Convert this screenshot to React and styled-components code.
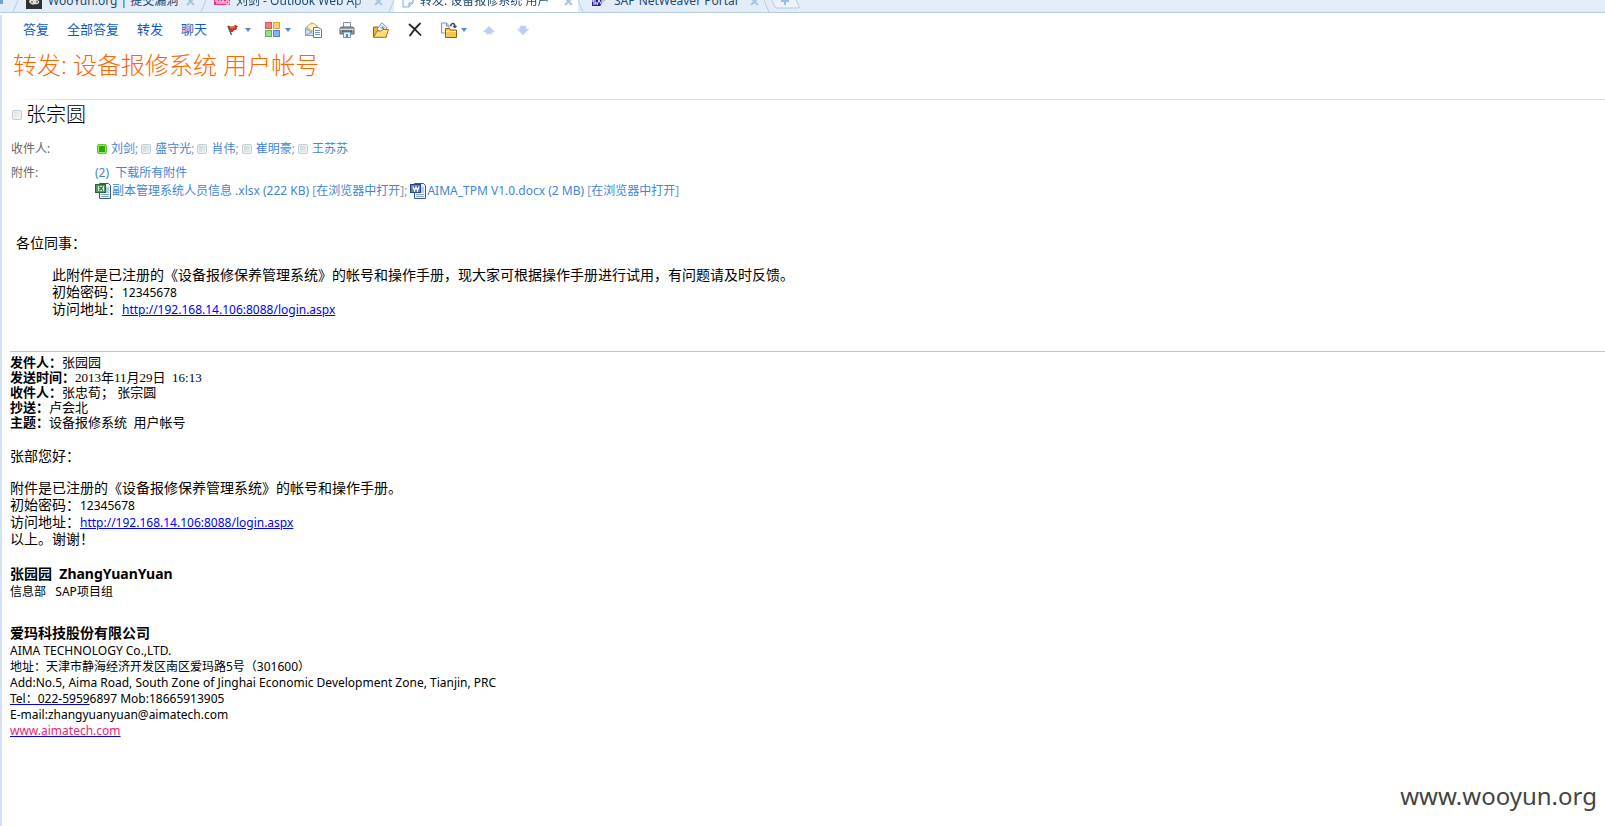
import React from "react";
import styled, { createGlobalStyle } from "styled-components";

const GlobalStyle = createGlobalStyle`
  body {
    margin: 0;
    background: #fff;
    color: #000;
    font-family: "Noto Sans", "Noto Sans CJK SC", sans-serif;
    font-size: 12px;
  }
  button {
    border: 0;
    padding: 0;
    background: none;
    font: inherit;
    color: inherit;
    cursor: pointer;
  }
  svg {
    display: block;
    flex: none;
  }
`;

const Page = styled.div`
  position: relative;
  min-height: 100vh;
  display: flex;
  flex-direction: column;
  overflow: hidden;
`;

/* tab strip, scrolled so only the lower edge of the tabs shows */
const TabStrip = styled.nav`
  height: 12px;
  display: flex;
  align-items: flex-end;
  overflow: hidden;
  background: #e3edf8;
  border-bottom: 1px solid #b4cbe6;
  color: #1c4a73;
  font-size: 12px;
`;

const HomeTab = styled.div`
  width: 12px;
  height: 22px;
  display: flex;
  align-items: center;
`;

const Tab = styled.div`
  width: ${props => props.width}px;
  height: 22px;
  display: flex;
  align-items: center;
  background: ${props => (props.active ? "#fff" : "transparent")};
`;

const TabLabel = styled.button`
  flex: 1;
  min-width: 0;
  height: 22px;
  display: flex;
  align-items: center;
  gap: 6px;
  padding-left: 8px;
  overflow: hidden;
  white-space: nowrap;
`;

const TabText = styled.span`
  flex: 1;
  min-width: 0;
  overflow: hidden;
  text-align: left;
  line-height: 20px;
  mask-image: ${props => (props.fade ? "linear-gradient(to right, #000 85%, transparent)" : "none")};
`;

const CloseButton = styled.button`
  padding-right: 5px;
`;

const Pane = styled.main`
  flex: 1;
  margin-top: 2px;
  border-left: 2px solid #d3e2f4;
`;

const Toolbar = styled.div`
  height: 27px;
  display: flex;
  align-items: center;
  gap: 14px;
  padding: 0 0 4px 21px;
`;

const TextButton = styled.button`
  padding-right: 4px;
  color: #0a5cc4;
  font-size: 13px;
  line-height: 20px;
  white-space: nowrap;
`;

const IconButton = styled.button`
  width: ${props => (props.drop ? 26 : 20)}px;
  display: flex;
  align-items: center;
  gap: 4px;
  padding-top: 2px;
`;

const Subject = styled.h1`
  margin: 0;
  padding-left: 11px;
  color: #ff6600;
  font-size: 24px;
  font-weight: 300;
  line-height: 38px;
`;

const Divider = styled.div`
  height: 1px;
  margin: 15px 0 0 10px;
  background: linear-gradient(to right, #fff, #dcdcdc 60px);
`;

const Sender = styled.h2`
  margin: 1px 0 0;
  padding-left: 10px;
  display: flex;
  align-items: center;
  gap: 4px;
  font-size: 20px;
  font-weight: 300;
  line-height: 28px;
`;

const Fields = styled.dl`
  margin: 8px 0 0;
  padding-left: 9px;
  display: grid;
  grid-template-columns: 84px 1fr;
  row-gap: 3px;
`;

const FieldName = styled.dt`
  color: #666;
  line-height: ${props => props.line}px;
`;

const FieldValue = styled.dd`
  margin: 0;
  color: #3f86d8;
  line-height: ${props => props.line}px;
`;

const People = styled.div`
  display: flex;
  flex-wrap: wrap;
  gap: 3px;
  padding-left: 2px;
`;

const Person = styled.span`
  display: flex;
  align-items: center;
  gap: 4px;
`;

const Presence = styled.i`
  width: 8px;
  height: 8px;
  border: 1px solid ${props => (props.online ? "#5fc62c" : "#c3cdd0")};
  border-radius: 2px;
  background: ${props =>
    props.online
      ? "linear-gradient(135deg, #3cae14, #2a9a0c)"
      : props.plain
      ? "linear-gradient(135deg, #dcdcdc, #f8f8f8)"
      : "linear-gradient(135deg, #c2d3d6, #eef3f4)"};
  box-shadow: inset 0 0 0 1px ${props => (props.online ? "#8fee58" : "#eef1f2")};
`;

const Files = styled.div`
  display: flex;
  flex-wrap: wrap;
  gap: 3px;
`;

const FileItem = styled.span`
  display: flex;
  align-items: center;
  gap: 1px;
  white-space: nowrap;
`;

const PlainLink = styled.a`
  color: #3f86d8;
  text-decoration: none;
`;

const Gray = styled.span`
  color: #8a9bb0;
`;

const Message = styled.article`
  margin-top: 34px;
  padding-left: 8px;
  font-size: 14px;
  line-height: 17px;
`;

const Greeting = styled.p`
  margin: 0;
  padding-left: 6px;
`;

const Paragraph = styled.p`
  margin: 15px 0 0;
  padding-left: ${props => (props.indent ? 42 : 0)}px;
`;

const Small = styled.span`
  font-size: 12px;
  line-height: 12px;
`;

const BodyLink = styled.a`
  color: #0000ff;
  font-size: 12px;
  line-height: 12px;
`;

const Quoted = styled.section`
  margin-top: 34px;
  padding-top: 3px;
  border-top: 1px solid #b5c4df;
`;

const Meta = styled.div`
  margin-bottom: 17px;
  font-family: "Liberation Serif", "Noto Sans CJK SC", serif;
  font-size: 13px;
  line-height: 15px;
`;

const Signature = styled.div`
  margin-top: 18px;
  font-size: 12px;
  line-height: 16px;
`;

const SignName = styled.div`
  font-size: 14px;
  font-weight: bold;
  line-height: 18px;
`;

const Department = styled.div`
  line-height: 18px;
  margin-bottom: 23px;
`;

const Contact = styled.div`
  padding-top: 1px;
`;

const SignLink = styled.a`
  color: ${props => (props.site ? "#f0246e" : "#000")};
  text-decoration-color: #0000ff;
`;

const Watermark = styled.div`
  position: absolute;
  right: 8px;
  bottom: 14px;
  color: #444;
  font-size: 24px;
  line-height: 32px;
`;

const Close = () => (
  <svg width="9" height="9" viewBox="0 0 9 9">
    <path d="M1 1l7 7M8 1L1 8" stroke="#a9c4e2" strokeWidth="2" />
  </svg>
);

const Slant = ({ back }) => (
  <svg width="6" height="12" viewBox="0 0 6 12">
    <path d={back ? "M0 0L5 12" : "M6 0L1 12"} stroke="#b4cbe6" fill="none" />
  </svg>
);

const Arrow = () => (
  <svg width="6" height="4" viewBox="0 0 6 4">
    <path d="M0 0h6L3 4z" fill="#5b87d6" />
  </svg>
);

const WooyunIcon = () => (
  <svg width="16" height="16" viewBox="0 0 16 16">
    <rect width="16" height="16" fill="#303030" />
    <path d="M3 9q0-3 3-2q2-3 4 0q4 0 3 3q-2 2-4 1q-3 2-6-2z" fill="#ddd" />
    <path d="M5 9h2M10 9h2" stroke="#333" />
  </svg>
);

const AimaIcon = () => (
  <svg width="16" height="16" viewBox="0 0 16 16">
    <path d="M0 6h16v6H0z" fill="#e8308c" />
    <path d="M1 8h3v3M6 7v4M8 11V8h2v3M12 8h3v3h-3zM2 10h1" fill="none" stroke="#fff" />
  </svg>
);

const NoteIcon = () => (
  <svg width="12" height="14" viewBox="0 0 12 14">
    <path d="M1 1h10v8l-4 4H1z" fill="#f5faff" stroke="#7aaee6" />
    <path d="M11 9H7v4" fill="#cfe3f8" stroke="#7aaee6" />
  </svg>
);

const SapIcon = () => (
  <svg width="16" height="16" viewBox="0 0 16 16">
    <path d="M0 5h15L8 13H0z" fill="#20209a" />
    <path d="M4 7H1v2h3v2H1M5 12l2-5 2 4M10 12V7h2v2h-2" fill="none" stroke="#fff" />
  </svg>
);

const FlagIcon = () => (
  <svg width="16" height="16" viewBox="0 0 16 16">
    <path d="M3 4l3.500 9" stroke="#3f4a7a" strokeWidth="1.300" />
    <path d="M3 4l3 1 2-.2 2-1.300 2.500.8-1.300 1.500.3 1.500-2.500.4-1.800 2.300-1.200-.8z" fill="#d6361c" stroke="#8f2416" strokeWidth=".7" />
    <path d="M5 5.500l2 .6 3-1.300" stroke="#f4805e" fill="none" />
  </svg>
);

const CategoryIcon = () => (
  <svg width="16" height="16" viewBox="0 0 16 16">
    <rect x=".5" y=".5" width="6" height="6" fill="#f07e76" stroke="#d9584f" />
    <rect x="8.500" y=".5" width="6" height="6" fill="#f9cf78" stroke="#dda23c" />
    <rect x=".5" y="8.500" width="6" height="6" fill="#90e282" stroke="#58b84a" />
    <rect x="8.500" y="8.500" width="6" height="6" fill="#8ab2f8" stroke="#5080dc" />
  </svg>
);

const MailIcon = () => (
  <svg width="17" height="16" viewBox="0 0 17 16">
    <path d="M.5 6L7 .8 14 6v7.500H.5z" fill="#cfe0f6" stroke="#7f9cc4" />
    <path d="M2.500 6q0-4 5-4.500 4.500.5 4.500 4.500L7.500 9z" fill="#fff3b8" stroke="#d9b44a" />
    <path d="M.5 6.500L7 10l-6.500 3.500" fill="none" stroke="#7f9cc4" />
    <path d="M8.500 5.500h5l3 2v8h-8z" fill="#fff" stroke="#5a78b0" />
    <path d="M10 8.500h5M10 10.500h5M10 12.500h5" stroke="#7896cc" />
  </svg>
);

const PrintIcon = () => (
  <svg width="16" height="16" viewBox="0 0 16 16">
    <path d="M4.500 6V.5h7V6" fill="#f6f8fc" stroke="#8890a0" />
    <path d="M1 6.500Q1 5 3 5h10q2 0 2 1.500V12H1z" fill="#9a9ea6" stroke="#5c6068" />
    <path d="M1 7.500h14" stroke="#d8dadf" />
    <path d="M3 9.500h10" stroke="#50545c" strokeWidth="2" />
    <path d="M4.500 10h7v5.500h-7z" fill="#e4f2fd" stroke="#6e90b8" />
    <path d="M8 12v3" stroke="#3b8fd6" strokeWidth="2" />
  </svg>
);

const MoveIcon = () => (
  <svg width="16" height="16" viewBox="0 0 16 16">
    <path d="M.5 15V5h5l1 2h7v8z" fill="#e9b53c" stroke="#8a6518" />
    <path d="M4 7L9 .8l5 5-4 6z" fill="#fafcff" stroke="#8090ac" />
    <path d="M7.500 5l3 3M9 3.500l3 3" stroke="#5e7fb8" />
    <path d="M9 5l2 2" stroke="#d4503c" />
    <path d="M.7 15.300L4 9h4l2-1.500h5.500L13 15.300z" fill="#fcdc78" stroke="#a37a20" />
  </svg>
);

const DeleteIcon = () => (
  <svg width="16" height="16" viewBox="0 0 16 16">
    <path d="M2.500 2.500q5 4 11 10.500M13 1.500Q8 6 3 13.500" fill="none" stroke="#262626" strokeWidth="1.800" strokeLinecap="round" />
  </svg>
);

const CopyIcon = () => (
  <svg width="16" height="16" viewBox="0 0 16 16">
    <path d="M.5 1h5L8 3.500V11H.5z" fill="#f2f6fc" stroke="#8495b4" />
    <path d="M5.500 1v3H8" fill="none" stroke="#8495b4" />
    <path d="M9 3.500h1q0-2 2-2 2 0 2 3.500M12 4l2 1.500L15.500 4" fill="none" stroke="#35456e" strokeWidth="1.300" />
    <path d="M4.500 15.500v-9h4l1 1.500h6v7.500z" fill="#f5c550" stroke="#8a6518" />
    <path d="M5 9.500h10" stroke="#ffeeaa" />
  </svg>
);

const MoveArrow = ({ down }) => (
  <svg width="16" height="16" viewBox="0 0 16 16">
    <path d={down ? "M5 4h6v3h3l-6 6-6-6h3z" : "M8 4l6 6h-3v2H5v-2H2z"} fill="#b9cdf6" stroke="#d5e1fb" strokeWidth=".8" />
  </svg>
);

const FileIcon = ({ word }) => (
  <svg width="16" height="16" viewBox="0 0 16 16">
    <path d="M4.500.5h9l2 2v13h-11z" fill="#eef4fd" stroke={word ? "#33599c" : "#375a86"} />
    <path d="M11 5h3M11 7h3M11 9h3M6 11.500h8M6 13.500h8" stroke="#86a5d8" />
    <rect x=".5" y="1.500" width="10" height="8" fill={word ? "#5b80cc" : "#4c9c55"} stroke={word ? "#264688" : "#256b30"} />
    <path d="M3 3h6v5H3z" fill={word ? "#3558a8" : "#e6f4e6"} />
    <path
      d={word ? "M3 3.500l1.500 4L6 4l1.500 3.500L9 3.500" : "M4 3.500l4 4M8 3.500l-4 4"}
      fill="none"
      stroke={word ? "#fff" : "#2c7d36"}
      strokeWidth="1.400"
    />
  </svg>
);

const recipients = ["刘剑", "盛守光", "肖伟", "崔明豪", "王苏苏"];

const meta = [
  ["发件人：", "张园园"],
  ["发送时间：", "2013年11月29日\u00a0 16:13"],
  ["收件人：", "张忠荀； 张宗圆"],
  ["抄送：", "卢会北"],
  ["主题：", "设备报修系统\u00a0 用户帐号"]
];

const loginUrl = "http://192.168.14.106:8088/login.aspx";

function BrowserTab({ icon, text, width, active, fade }) {
  return (
    <Tab width={width} active={active}>
      <TabLabel>
        {icon}
        <TabText fade={fade}>{text}</TabText>
      </TabLabel>
      <CloseButton aria-label="关闭">
        <Close />
      </CloseButton>
    </Tab>
  );
}

function Credentials() {
  return (
    <>
      初始密码：<Small>12345678</Small>
      <br />
      访问地址：<BodyLink href={loginUrl}>{loginUrl}</BodyLink>
    </>
  );
}

function App() {
  return (
    <Page>
      <GlobalStyle />
      <TabStrip>
        <HomeTab>
          <svg width="4" height="12" viewBox="0 0 4 12">
            <path d="M0 2h3v7H0z" fill="#6f9fd6" />
          </svg>
        </HomeTab>
        <Slant />
        <BrowserTab width={182} icon={<WooyunIcon />} text="WooYun.org | 提交漏洞" />
        <Slant />
        <BrowserTab width={182} icon={<AimaIcon />} text="刘剑 - Outlook Web Ap" fade />
        <Slant />
        <BrowserTab width={184} icon={<NoteIcon />} text="转发: 设备报修系统 用户" active fade />
        <Slant back />
        <BrowserTab width={180} icon={<SapIcon />} text="SAP NetWeaver Portal" />
        <Slant back />
        <button aria-label="新建标签页">
          <svg width="32" height="12" viewBox="0 0 32 12">
            <path d="M2 0l3 7q1 1 3 1h20q2 0 1-2l-3-6" fill="#eaf2fb" stroke="#b4cbe6" />
            <path d="M11 1h8M15 0v5" stroke="#9dbde0" strokeWidth="2" />
          </svg>
        </button>
      </TabStrip>

      <Pane>
        <Toolbar>
          <TextButton>答复</TextButton>
          <TextButton>全部答复</TextButton>
          <TextButton>转发</TextButton>
          <TextButton>聊天</TextButton>
          <IconButton drop aria-label="标志">
            <FlagIcon />
            <Arrow />
          </IconButton>
          <IconButton drop aria-label="类别">
            <CategoryIcon />
            <Arrow />
          </IconButton>
          <IconButton aria-label="邮件">
            <MailIcon />
          </IconButton>
          <IconButton aria-label="打印">
            <PrintIcon />
          </IconButton>
          <IconButton aria-label="移动">
            <MoveIcon />
          </IconButton>
          <IconButton aria-label="删除">
            <DeleteIcon />
          </IconButton>
          <IconButton drop aria-label="复制到文件夹">
            <CopyIcon />
            <Arrow />
          </IconButton>
          <IconButton aria-label="上一封">
            <MoveArrow />
          </IconButton>
          <IconButton aria-label="下一封">
            <MoveArrow down />
          </IconButton>
        </Toolbar>

        <Subject>转发: 设备报修系统 用户帐号</Subject>
        <Divider />
        <Sender>
          <Presence plain />
          张宗圆
        </Sender>

        <Fields>
          <FieldName line={24}>收件人:</FieldName>
          <FieldValue line={24}>
            <People>
              {recipients.map((name, i) => (
                <Person key={name}>
                  <Presence online={i === 0} />
                  <span>
                    {name}
                    {i < recipients.length - 1 && <Gray>;</Gray>}
                  </span>
                </Person>
              ))}
            </People>
          </FieldValue>
          <FieldName line={18}>附件:</FieldName>
          <FieldValue line={18}>
            (2)&nbsp; <PlainLink href="#all">下载所有附件</PlainLink>
            <Files>
              <FileItem>
                <FileIcon />
                <span>
                  <PlainLink href="#xlsx">副本管理系统人员信息 .xlsx (222 KB)</PlainLink> <Gray>[</Gray>
                  <PlainLink href="#open-xlsx">在浏览器中打开</PlainLink>
                  <Gray>];</Gray>
                </span>
              </FileItem>
              <FileItem>
                <FileIcon word />
                <span>
                  <PlainLink href="#docx">AIMA_TPM V1.0.docx (2 MB)</PlainLink> <Gray>[</Gray>
                  <PlainLink href="#open-docx">在浏览器中打开</PlainLink>
                  <Gray>]</Gray>
                </span>
              </FileItem>
            </Files>
          </FieldValue>
        </Fields>

        <Message>
          <Greeting>各位同事：</Greeting>
          <Paragraph indent>
            此附件是已注册的《设备报修保养管理系统》的帐号和操作手册，现大家可根据操作手册进行试用，有问题请及时反馈。
            <br />
            <Credentials />
          </Paragraph>

          <Quoted>
            <Meta>
              {meta.map(([label, value]) => (
                <div key={label}>
                  <b>{label}</b>
                  {value}
                </div>
              ))}
            </Meta>
            张部您好：
            <Paragraph>
              附件是已注册的《设备报修保养管理系统》的帐号和操作手册。
              <br />
              <Credentials />
              <br />
              以上。谢谢！
            </Paragraph>

            <Signature>
              <SignName>张园园&nbsp; ZhangYuanYuan</SignName>
              <Department>信息部&nbsp;&nbsp; SAP项目组</Department>
              <SignName>爱玛科技股份有限公司</SignName>
              <Contact>
                <div>AIMA TECHNOLOGY Co.,LTD.</div>
                <div>地址：天津市静海经济开发区南区爱玛路5号（301600）</div>
                <div>Add:No.5, Aima Road, South Zone of Jinghai Economic Development Zone, Tianjin, PRC</div>
                <div>
                  <SignLink href="tel:022-59596897">Tel：022-5959</SignLink>6897 Mob:18665913905
                </div>
                <div>E-mail:zhangyuanyuan@aimatech.com</div>
                <div>
                  <SignLink site href="http://www.aimatech.com">www.aimatech.com</SignLink>
                </div>
              </Contact>
            </Signature>
          </Quoted>
        </Message>
      </Pane>
      <Watermark>www.wooyun.org</Watermark>
    </Page>
  );
}

export default App;
